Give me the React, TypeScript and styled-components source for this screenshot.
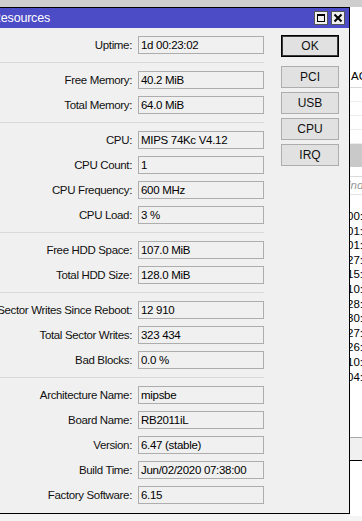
import { createGlobalStyle, styled } from "styled-components";

const GlobalStyle = createGlobalStyle`
  html, body {
    margin: 0;
    padding: 0;
    background: #f4f4f4;
  }
  body {
    font-family: "Liberation Sans", Arial, sans-serif;
    font-size: 11.5px;
    color: #000;
  }
`;

const Page = styled.div`
  width: 362px;
  height: 521px;
  overflow: hidden;
  display: flex;
  flex-direction: column;
`;

const TopBand = styled.div`
  height: 7px;
  flex: none;
  background: #cecece;
`;

const Desk = styled.div`
  display: flex;
  align-items: flex-start;
`;

const Window = styled.div`
  flex: none;
  width: 359px;
  margin-left: -9px;
  box-sizing: border-box;
  border: 1px solid #000;
  background: #f0f0f0;
  display: flex;
  flex-direction: column;
`;

const TitleBar = styled.div`
  height: 20px;
  background: #4c4cc6;
  display: flex;
  align-items: center;
  padding-right: 4px;
  gap: 3px;
`;

const Title = styled.span`
  flex: 1;
  color: #fff;
  font-size: 12.5px;
  letter-spacing: -0.2px;
`;

const TitleButton = styled.span`
  width: 14px;
  height: 14px;
  box-sizing: border-box;
  border: 1px solid #555;
  background: #efefef;
  display: flex;
  align-items: center;
  justify-content: center;
  svg {
    display: block;
  }
`;

const Body = styled.div`
  display: flex;
  padding: 0 9px 9px 0;
`;

const Form = styled.div`
  display: flex;
  flex-direction: column;
  padding-top: 8px;
`;

const Section = styled.div`
  display: flex;
  flex-direction: column;
  gap: 7px;
`;

const Divider = styled.div`
  height: 1px;
  width: 272px;
  background: #d9d9d9;
  margin: 8px 0;
`;

const Row = styled.div`
  display: grid;
  grid-template-columns: 140px 126px;
  column-gap: 6px;
  align-items: center;
  height: 18px;
`;

const Label = styled.span`
  text-align: right;
  white-space: nowrap;
  letter-spacing: -0.35px;
  color: #111;
`;

const Value = styled.div`
  height: 18px;
  box-sizing: border-box;
  border: 1px solid #adadad;
  background: #f0f0f0;
  padding-left: 2px;
  line-height: 16px;
  white-space: nowrap;
  overflow: hidden;
  letter-spacing: -0.3px;
`;

const Buttons = styled.div`
  display: flex;
  flex-direction: column;
  gap: 4px;
  margin-left: 17px;
  padding-top: 7px;
`;

const Button = styled.button<{ $default?: boolean }>`
  width: 58px;
  height: 22px;
  box-sizing: border-box;
  margin: 0 0 ${(p) => (p.$default ? "5px" : "0")};
  padding: 0;
  font: inherit;
  font-size: 12px;
  color: #111;
  background: #e1e1e1;
  border: 1px solid ${(p) => (p.$default ? "#000" : "#adadad")};
  box-shadow: ${(p) => (p.$default ? "inset 0 0 0 1px #3a3a3a" : "none")};
`;

const Strip = styled.div`
  flex: 1;
  height: 509px;
  overflow: hidden;
  background: #fff;
  display: flex;
  flex-direction: column;
`;

const StripHeader = styled.div`
  margin-top: 58px;
  height: 22px;
  line-height: 22px;
  border-bottom: 1px solid #d8d8d8;
  white-space: nowrap;
  text-indent: 1px;
`;

const StripLine = styled.div`
  height: 13px;
  border-bottom: 1px solid #ececec;
`;

const GreyBand = styled.div`
  height: 23px;
  background: #c9c9c9;
`;

const FindBox = styled.div`
  margin-top: 9px;
  height: 17px;
  line-height: 17px;
  border-top: 1px solid #dadada;
  border-bottom: 1px solid #e4e4e4;
  color: #999;
  font-style: italic;
  white-space: nowrap;
  text-indent: -2px;
`;

const TimeList = styled.div`
  margin-top: 14px;
  display: flex;
  flex-direction: column;
`;

const Time = styled.div`
  height: 14.6px;
  line-height: 14.6px;
  white-space: nowrap;
  text-indent: -3px;
`;

const StripFooter = styled.div`
  margin-top: 53px;
  height: 22px;
  border-top: 1px solid #a8a8a8;
  border-bottom: 1px solid #000;
  background: #f0f0f0;
`;

const sections: [string, string][][] = [
  [["Uptime", "1d 00:23:02"]],
  [
    ["Free Memory", "40.2 MiB"],
    ["Total Memory", "64.0 MiB"],
  ],
  [
    ["CPU", "MIPS 74Kc V4.12"],
    ["CPU Count", "1"],
    ["CPU Frequency", "600 MHz"],
    ["CPU Load", "3 %"],
  ],
  [
    ["Free HDD Space", "107.0 MiB"],
    ["Total HDD Size", "128.0 MiB"],
  ],
  [
    ["Sector Writes Since Reboot", "12 910"],
    ["Total Sector Writes", "323 434"],
    ["Bad Blocks", "0.0 %"],
  ],
  [
    ["Architecture Name", "mipsbe"],
    ["Board Name", "RB2011iL"],
    ["Version", "6.47 (stable)"],
    ["Build Time", "Jun/02/2020 07:38:00"],
    ["Factory Software", "6.15"],
  ],
];

const times = ["00:", "01:", "01:", "27:", "15:", "10:", "28:", "30:", "27:", "26:", "10:", "04:"];

export default function App() {
  return (
    <>
      <GlobalStyle />
      <Page>
        <TopBand />
        <Desk>
          <Window>
            <TitleBar>
              <Title>Resources</Title>
              <TitleButton>
                <svg width="10" height="10" viewBox="0 0 10 10">
                  <rect x="1.5" y="1.5" width="7" height="7" fill="none" stroke="#000" strokeWidth="1" />
                  <rect x="1" y="1" width="8" height="2" fill="#000" />
                </svg>
              </TitleButton>
              <TitleButton>
                <svg width="10" height="10" viewBox="0 0 10 10">
                  <path d="M1.5 1.5 L8.5 8.5 M8.5 1.5 L1.5 8.5" stroke="#000" strokeWidth="2" />
                </svg>
              </TitleButton>
            </TitleBar>
            <Body>
              <Form>
                {sections.map((rows, i) => (
                  <div key={i}>
                    {i > 0 && <Divider />}
                    <Section>
                      {rows.map(([label, value]) => (
                        <Row key={label}>
                          <Label>{label}:</Label>
                          <Value>{value}</Value>
                        </Row>
                      ))}
                    </Section>
                  </div>
                ))}
              </Form>
              <Buttons>
                <Button $default>OK</Button>
                <Button>PCI</Button>
                <Button>USB</Button>
                <Button>CPU</Button>
                <Button>IRQ</Button>
              </Buttons>
            </Body>
          </Window>
          <Strip>
            <StripHeader>AC</StripHeader>
            <StripLine />
            <StripLine />
            <StripLine />
            <StripLine />
            <GreyBand />
            <FindBox>ind</FindBox>
            <TimeList>
              {times.map((t, i) => (
                <Time key={i}>{t}</Time>
              ))}
            </TimeList>
            <StripFooter />
          </Strip>
        </Desk>
      </Page>
    </>
  );
}
